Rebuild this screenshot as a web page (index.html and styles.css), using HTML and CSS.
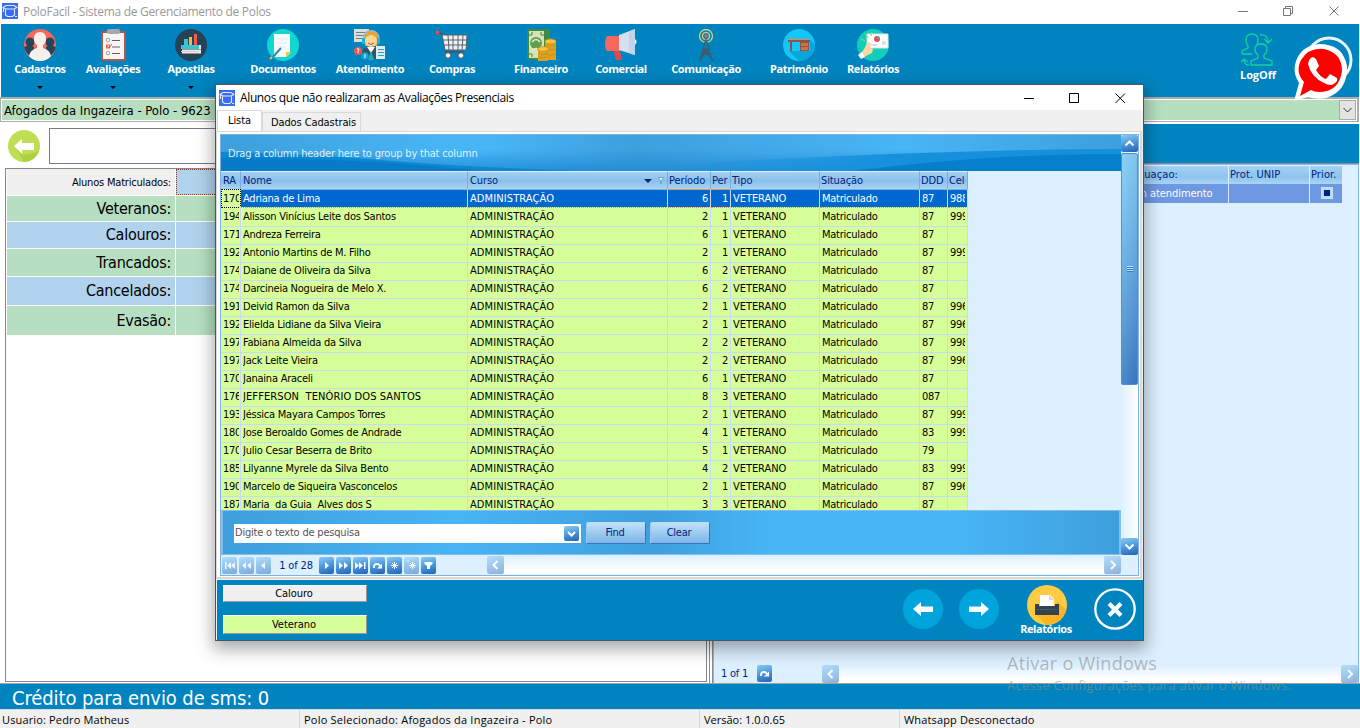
FILE: index.html
```html
<!DOCTYPE html>
<html lang="pt-BR">
<head>
<meta charset="utf-8">
<title>PoloFacil - Sistema de Gerenciamento de Polos</title>
<link rel="stylesheet" href="styles.css">
</head>
<body>
<svg width="0" height="0" class="defs">
  <defs>
    <symbol id="app" viewBox="0 0 16 16"><rect width="16" height="16" fill="#3a6cf0"/><path d="M1 4.500l3-2h8l3 2-3 1.500H4zM3.500 6.500V12l2 1.500h5l2-1.500V6.500M1.500 5v4" fill="none" stroke="#dfe9ff" stroke-width="1.100"/><path d="M13 13.500h2" stroke="#dfe9ff"/></symbol>
    <symbol id="chev-l" viewBox="0 0 17 18"><path d="M10.500 5L6.500 9l4 4" fill="none" stroke="#fff" stroke-width="2"/></symbol>
    <symbol id="chev-r" viewBox="0 0 17 18"><path d="M7 5l4 4-4 4" fill="none" stroke="#fff" stroke-width="2"/></symbol>
    <symbol id="refresh" viewBox="0 0 15 16"><path d="M4 10.500Q3.500 6.500 7 6.500q2 0 3 2" fill="none" stroke="#fff" stroke-width="1.800"/><path d="M12 6v5H7z" fill="#fff"/></symbol>
  </defs>
</svg>

<div class="window">
  <header class="titlebar">
    <svg class="app-icon" width="16" height="16"><use href="#app"/></svg>
    <span class="title">PoloFacil - Sistema de Gerenciamento de Polos</span>
    <svg class="win-controls" width="102" height="12" viewBox="0 0 102 12" fill="none" stroke="#777"><path d="M0 6.500h10M45.500 3.500h7v7h-7zM47.500 3.500v-2h7v7h-2M91.500 1.500l9 9M100.500 1.500l-9 9"/></svg>
  </header>

  <nav class="toolbar">
    <div class="tool w78"><svg width="32" height="32" viewBox="0 0 32 32"><circle cx="16" cy="16" r="16" fill="#f9695b"/><g fill="#25455a"><circle cx="6" cy="13" r="4.500"/><path d="M0 18q6-3 10 0v11Q2 26 0 18z"/><circle cx="26" cy="13" r="4.500"/><path d="M32 18q-6-3-10 0v11q8-3 10-11z"/></g><path d="M16 3q6 0 6 7 0 4-3 6v3q7 2 8 8-4 5-11 5T5 27q1-6 8-8v-3q-3-2-3-6 0-7 6-7z" fill="#f4f1ec"/></svg><span>Cadastros</span><i class="caret"></i></div>
    <div class="tool w68"><svg width="32" height="32" viewBox="0 0 32 32"><rect x="4" y="2" width="25" height="30" rx="2" fill="#b0574e"/><rect x="6" y="4" width="21" height="26" fill="#f7f6f2"/><rect x="10" y="0" width="13" height="5" rx="2" fill="#a4a9b0"/><g fill="none" stroke="#a0a0a0"><circle cx="11" cy="11" r="1.800"/><circle cx="11" cy="24" r="1.800"/><rect x="9.500" y="16" width="3" height="3" stroke="#e8604f"/></g><path d="M15 11.500h8M15 18h8M15 24.500h8" stroke="#6d5d61"/><path d="M10 17l2 2 3-4" fill="none" stroke="#ef4b3c"/></svg><span>Avaliações</span><i class="caret"></i></div>
    <div class="tool w88"><svg width="32" height="32" viewBox="0 0 32 32"><circle cx="16" cy="16" r="16" fill="#264254"/><path fill="#3fc2d2" d="M9 10h4v6H9zM6 16h19v4H6z"/><path fill="#f5b83d" d="M14 8h3v8h-3z"/><path fill="#ee5a4b" d="M19 5h3v11h-3z"/><path d="M24 16h2v4h-2zM7 20.500h19v4H7z" fill="#f1efe9"/><path d="M6 22.500h18" stroke="#d0ccc7"/></svg><span>Apostilas</span><i class="caret"></i></div>
    <div class="tool w96"><svg width="32" height="32" viewBox="0 0 32 32"><circle cx="16" cy="16" r="16" fill="#12d6d0"/><path d="M7 5h16v19l-4 4H7z" fill="#f7fafb"/><path d="M24 23l-5 5v-5z" fill="#f2c84a"/><path d="M10 10h10M10 14h10M10 18h8" stroke="#e0eaee"/><path d="M14 19l-9 10" stroke="#3187b6" stroke-width="2"/><path d="M5 28l-2 2" stroke="#f0c040" stroke-width="2"/></svg><span>Documentos</span></div>
    <div class="tool w78"><svg width="32" height="32" viewBox="0 0 32 32"><path fill="#d9e0dc" d="M0 0h15v13H0z"/><path d="M2 3.500h9M2 6.500h9M2 9.500h8" stroke="#6e8186"/><path fill="#e9a52d" d="M10 10Q10 1 17 1t7 9l-1 7H11z"/><circle cx="17" cy="12" r="6" fill="#ffd595"/><path d="M10 11Q9 2 17 2t8 9" fill="none" stroke="#98b8c8" stroke-width="1.500"/><path d="M8 9h3v6H8zM23 9h3v6h-3z" fill="#15b9d8"/><path d="M14 14q3 3 6 0" fill="none" stroke="#b0503e"/><path d="M8 23q1-4 6-5h6q6 1 6 6v6H9z" fill="#3a5068"/><path d="M13 18h8l-4 6z" fill="#fff"/><path d="M17 22l3 8-3 2-3-2z" fill="#18b3ae"/><circle cx="4" cy="22" r="4" fill="#ee5a4b"/><circle cx="11" cy="27" r="3.700" fill="#14a1d9"/><path fill="#dceef0" d="M22 17h9v13h-9z"/><path d="M24 20.500h6M24 23.500h6M24 26.500h6" stroke="#3a9cb8"/><path d="M3 20q2-1 2 1l-1 1v2M11 25v4" stroke="#fff" fill="none"/></svg><span>Atendimento</span></div>
    <div class="tool w86"><svg width="32" height="32" viewBox="0 0 32 32"><path d="M2 3l4 2 4 18h18" fill="none" stroke="#4a5260" stroke-width="1.500"/><path d="M6 6h25l-1 15H9z" fill="#eef0f4" stroke="#59606e"/><path d="M12 6l1 15M17 6v15M22 6v15M27 6l-1 15M7 11h23M8 16h22" stroke="#59606e" fill="none"/><circle cx="1.500" cy="3.500" r="2" fill="#e94b4b"/><g fill="#fff" stroke="#59606e"><circle cx="12" cy="26.500" r="2.700"/><circle cx="25" cy="26.500" r="2.700"/></g></svg><span>Compras</span></div>
    <div class="tool w92"><svg width="32" height="32" viewBox="0 0 32 32"><path fill="#3f8a45" d="M2 0h23v31H2z"/><path fill="#d7e2b5" d="M4 2h15v27H4z"/><path d="M7 3v3H4M16 3v3h3M7 28v-3H4" stroke="#3f8a45" fill="none"/><circle cx="11" cy="14" r="6" fill="#5da052"/><path d="M7 13q4-5 8 0M7 22q4-5 8 0" fill="none" stroke="#e8edcb" stroke-width="1.500"/><path fill="#dba21e" d="M20 12h11v19H20zM13 20h10v12H13z"/><g fill="#f7c53b" stroke="#c98d19" stroke-width=".8"><ellipse cx="25.500" cy="12.500" rx="5.500" ry="2.500"/><path d="M20 16q5 3 11 0M20 20q5 3 11 0M20 25q5 3 11 0M13 28q5 2 10 0" fill="none"/><ellipse cx="18" cy="20" rx="5.500" ry="2.300"/><path d="M13 24q5 3 10 0" fill="none"/></g></svg><span>Financeiro</span></div>
    <div class="tool w68"><svg width="32" height="32" viewBox="0 0 32 32"><path d="M7 18h7l3 13h-6z" fill="#d94c50"/><path d="M2 7h13v15H2q-2-2-2-7t2-8z" fill="#f8675e"/><path d="M14 6L30 0v26L14 21z" fill="#d3e0ef"/><path d="M24 3l6-3v26l-6-2z" fill="#c3d4e8"/><path d="M30 10q3 2 0 6z" fill="#fff"/></svg><span>Comercial</span></div>
    <div class="tool w102"><svg width="32" height="32" viewBox="0 0 32 32" fill="none"><circle cx="16" cy="7" r="6.500" stroke="#d6d27b" stroke-width="1.300"/><circle cx="16" cy="7" r="3.500" stroke="#f0cc60" stroke-width="1.200"/><path d="M16 7v7M15 13l-5 19M17 13l5 19M13 20h6M12 25h8M9 31l10-11M23 31L13 20M13 20l7 5M19 20l-7 5" stroke="#46566a" stroke-width="1.200"/><circle cx="16" cy="7" r="1.500" fill="#e2694f"/></svg><span>Comunicação</span></div>
    <div class="tool w84"><svg width="32" height="32" viewBox="0 0 32 32"><circle cx="16" cy="16" r="16" fill="#12c7fb"/><path d="M6 22l10 10q14-1 16-16l-5-5v11z" fill="#08a6dc"/><path fill="#8f5442" d="M5 10h22v3H5zM7 13h2v9H7zM17 13h9v9h-9z"/><path fill="#c77451" d="M18 14h7v3h-7zM18 18h7v3h-7z"/><path d="M5 10.500h22" stroke="#d48a62"/></svg><span>Patrimônio</span></div>
    <div class="tool w64"><svg width="32" height="32" viewBox="0 0 32 32"><circle cx="16" cy="16" r="16" fill="#12cdb8"/><path fill="#fff" stroke="#dce1e8" d="M10 5h21v14H10z"/><circle cx="20" cy="10" r="3" fill="#ed4b58"/><path d="M20 10V7a3 3 0 0 1 3 3z" fill="#31b6cf"/><path d="M25 13h4M25 15h4M14 16h6" stroke="#bac3cc"/><path fill="#ffd5a1" d="M11 13l3 1-1 5 3 1-1 4-8 4-4-2 4-6z"/><path d="M1 26l4-3 3 5-4 2z" fill="#fff"/><path d="M11 9l-2-4M14 7l1-4M8 12l-4-2" stroke="#9ae34e"/></svg><span>Relatórios</span></div>
    <div class="tool logoff"><svg width="36" height="34" viewBox="0 0 36 34" fill="none" stroke="#12d29b" stroke-width="1.300"><path d="M2 21v-3l6-3v-2q-2-2-2-6 0-6 6-6t6 6q0 3-1 4M2 21h10"/><path d="M18 25v-3q-3-2-3-6 0-5 6-5t6 5q0 4-3 6v3l8 3v4H11v-4z"/><path d="M20 2q8-1 8 7M24.500 6l3.500 4 4-4M4 26q0 6 5 6M1 29l3-3 4 3"/></svg><span>LogOff</span></div>
    <svg class="whatsapp" width="62" height="66" viewBox="0 0 62 66"><circle cx="36" cy="24" r="22" fill="none" stroke="#e8f5ff" stroke-width="3"/><path d="M1 65l5-18Q0 37 2 29q4-19 24-21 24 0 28 22 1 25-21 32-8 2-18-1z" fill="#fff"/><path d="M7 60l4-14Q2 36 8 24q8-13 23-11 18 4 18 22-3 21-23 21-5 0-8-2z" fill="#fe0000"/><path d="M15 28q1-6 5-7l3 2 3 7-3 4q4 7 10 9l4-5 7 4q1 3-2 5-4 4-11 0-13-6-16-19z" fill="#fff"/></svg>
  </nav>

  <div class="combo"><div class="combo-text">Afogados da Ingazeira - Polo - 9623</div><div class="combo-btn"><svg width="9" height="6" viewBox="0 0 9 6"><path d="M.5 1l4 4 4-4" fill="none" stroke="#333"/></svg></div></div>

  <main class="main">
    <section class="left">
      <div class="search-row">
        <svg width="32" height="32" viewBox="0 0 32 32"><circle cx="16" cy="16" r="16" fill="#bedf53"/><path d="M8 18l7 7 12-2 4-3q-3 11-15 12z" fill="#acd03f"/><path d="M6 16l8-7v4h12v7H14v4z" fill="#fff"/></svg>
        <div class="search-input"></div>
      </div>
      <div class="stats">
        <div class="stat first"><b>Alunos Matriculados:</b><i></i></div>
        <div class="stat green h25"><b>Veteranos:</b><i></i></div>
        <div class="stat blue h26"><b>Calouros:</b><i></i></div>
        <div class="stat green h27"><b>Trancados:</b><i></i></div>
        <div class="stat blue h28"><b>Cancelados:</b><i></i></div>
        <div class="stat green h29"><b>Evasão:</b><i></i></div>
      </div>
    </section>
    <section class="right">
      <div class="right-top"></div>
      <div class="tickets">
        <div class="t-head"><span></span><span>Situaçao:</span><span>Prot. UNIP</span><span>Prior.</span></div>
        <div class="t-row"><span></span><span>Em atendimento</span><span></span><span><em class="check"></em></span></div>
        <div class="t-foot"><span>1 of 1</span><svg class="nbtn" width="15" height="17"><use href="#refresh"/></svg><div class="hscroll"><svg class="sbtn off" width="17" height="18"><use href="#chev-l"/></svg><svg class="sbtn off" width="17" height="18"><use href="#chev-r"/></svg></div></div>
      </div>
    </section>
  </main>

  <div class="credit">Crédito para envio de sms: 0</div>
  <footer class="status"><span class="s1">Usuario: Pedro Matheus</span><span class="s2">Polo Selecionado: Afogados da Ingazeira - Polo</span><span class="s3">Versão: 1.0.0.65</span><span class="s4">Whatsapp Desconectado</span></footer>
</div>

<div class="watermark"><p>Ativar o Windows</p><small>Acesse Configurações para ativar o Windows.</small></div>

<div class="dialog">
  <header class="d-title">
    <svg class="app-icon" width="16" height="16"><use href="#app"/></svg>
    <span>Alunos que não realizaram as Avaliações Presenciais</span>
    <svg class="d-controls" width="102" height="12" viewBox="0 0 102 12" fill="none" stroke="#000"><path d="M0 6.500h10M45.500 1.500h9v9h-9zM91.500 1.500l9.500 9.500M101 1.500l-9.500 9.500"/></svg>
  </header>
  <div class="tabs"><div class="tab on">Lista</div><div class="tab">Dados Cadastrais</div></div>
  <div class="page">
    <div class="grid">
      <div class="grid-top">
        <div class="grid-main">
          <div class="groupbar"><svg class="wave" width="900" height="36" viewBox="0 0 900 36"><defs><linearGradient id="fade" x1="0" x2="1" y1="0" y2="0"><stop offset="0" stop-color="#1591dc" stop-opacity="0"/><stop offset=".5" stop-color="#1591dc"/></linearGradient><linearGradient id="low" x1="0" x2="0" y1="0" y2="1"><stop offset=".4" stop-color="#1a86d0" stop-opacity="0"/><stop offset="1" stop-color="#1a86d0" stop-opacity=".75"/></linearGradient></defs><path d="M0 0h700v36H0z" fill="url(#low)"/><path d="M0 17Q80 18 160 25T360 36H0z" fill="#0b88d0"/><path d="M0 23Q130 22 260 36H0z" fill="#087bc8"/><path d="M440 30Q720 14 900 14v22H440z" fill="url(#fade)"/><path d="M630 36Q780 18 900 19v17z" fill="#0580cc"/></svg><span>Drag a column header here to group by that column</span></div>
          <div class="rows">
            <div class="row head"><span>RA</span><span>Nome</span><span class="sorted">Curso<svg width="20" height="8" viewBox="0 0 20 8"><path d="M0 2h8l-4 4z" fill="#00237d"/><path d="M14.500.5h5l-2 3v3h-1v-3z" fill="#fff" stroke="#4a8ad0" stroke-width=".7"/></svg></span><span>Período</span><span>Per</span><span>Tipo</span><span>Situação</span><span>DDD</span><span>Cel</span></div>
            <div class="row sel"><span>170</span><span>Adriana de Lima</span><span>ADMINISTRAÇÃO</span><span>6</span><span>1</span><span>VETERANO</span><span>Matriculado</span><span>87</span><span>988</span></div>
            <div class="row"><span>194</span><span>Alisson Vinícius Leite dos Santos</span><span>ADMINISTRAÇÃO</span><span>2</span><span>1</span><span>VETERANO</span><span>Matriculado</span><span>87</span><span>999</span></div>
            <div class="row"><span>171</span><span>Andreza Ferreira</span><span>ADMINISTRAÇÃO</span><span>6</span><span>1</span><span>VETERANO</span><span>Matriculado</span><span>87</span><span></span></div>
            <div class="row"><span>192</span><span>Antonio Martins de M. Filho</span><span>ADMINISTRAÇÃO</span><span>2</span><span>1</span><span>VETERANO</span><span>Matriculado</span><span>87</span><span>999</span></div>
            <div class="row"><span>174</span><span>Daiane de Oliveira da Silva</span><span>ADMINISTRAÇÃO</span><span>6</span><span>2</span><span>VETERANO</span><span>Matriculado</span><span>87</span><span></span></div>
            <div class="row"><span>174</span><span>Darcineia Nogueira de Melo X.</span><span>ADMINISTRAÇÃO</span><span>6</span><span>2</span><span>VETERANO</span><span>Matriculado</span><span>87</span><span></span></div>
            <div class="row"><span>191</span><span>Deivid Ramon da Silva</span><span>ADMINISTRAÇÃO</span><span>2</span><span>1</span><span>VETERANO</span><span>Matriculado</span><span>87</span><span>996</span></div>
            <div class="row"><span>192</span><span>Elielda Lidiane da Silva Vieira</span><span>ADMINISTRAÇÃO</span><span>2</span><span>1</span><span>VETERANO</span><span>Matriculado</span><span>87</span><span>996</span></div>
            <div class="row"><span>197</span><span>Fabiana Almeida da Silva</span><span>ADMINISTRAÇÃO</span><span>2</span><span>2</span><span>VETERANO</span><span>Matriculado</span><span>87</span><span>998</span></div>
            <div class="row"><span>197</span><span>Jack Leite Vieira</span><span>ADMINISTRAÇÃO</span><span>2</span><span>2</span><span>VETERANO</span><span>Matriculado</span><span>87</span><span>996</span></div>
            <div class="row"><span>170</span><span>Janaina Araceli</span><span>ADMINISTRAÇÃO</span><span>6</span><span>1</span><span>VETERANO</span><span>Matriculado</span><span>87</span><span></span></div>
            <div class="row"><span>176</span><span class="caps">JEFFERSON&nbsp; TENÓRIO DOS SANTOS</span><span>ADMINISTRAÇÃO</span><span>8</span><span>3</span><span>VETERANO</span><span>Matriculado</span><span>087</span><span></span></div>
            <div class="row"><span>193</span><span>Jéssica Mayara Campos Torres</span><span>ADMINISTRAÇÃO</span><span>2</span><span>1</span><span>VETERANO</span><span>Matriculado</span><span>87</span><span>999</span></div>
            <div class="row"><span>180</span><span>Jose Beroaldo Gomes de Andrade</span><span>ADMINISTRAÇÃO</span><span>4</span><span>1</span><span>VETERANO</span><span>Matriculado</span><span>83</span><span>999</span></div>
            <div class="row"><span>170</span><span>Julio Cesar Beserra de Brito</span><span>ADMINISTRAÇÃO</span><span>5</span><span>1</span><span>VETERANO</span><span>Matriculado</span><span>79</span><span></span></div>
            <div class="row"><span>185</span><span>Lilyanne Myrele da Silva Bento</span><span>ADMINISTRAÇÃO</span><span>4</span><span>2</span><span>VETERANO</span><span>Matriculado</span><span>83</span><span>999</span></div>
            <div class="row"><span>190</span><span>Marcelo de Siqueira Vasconcelos</span><span>ADMINISTRAÇÃO</span><span>2</span><span>1</span><span>VETERANO</span><span>Matriculado</span><span>87</span><span>996</span></div>
            <div class="row"><span>187</span><span>Maria&nbsp; da Guia&nbsp; Alves dos S</span><span>ADMINISTRAÇÃO</span><span>3</span><span>3</span><span>VETERANO</span><span>Matriculado</span><span>87</span><span></span></div>
          </div>
          <div class="findbar">
            <div class="find-input"><span>Digite o texto de pesquisa</span><svg class="nbtn" width="15" height="15" viewBox="0 0 15 15"><path d="M4 6l3.500 3.500L11 6" fill="none" stroke="#fff" stroke-width="2"/></svg></div>
            <div class="btn">Find</div><div class="btn">Clear</div>
          </div>
        </div>
        <div class="vscroll">
          <svg class="sbtn" width="17" height="17" viewBox="0 0 17 17"><path d="M4.500 10.500l4-4 4 4" fill="none" stroke="#fff" stroke-width="2"/></svg>
          <div class="thumb"><i></i></div>
          <svg class="sbtn" width="17" height="17" viewBox="0 0 17 17"><path d="M4.500 6.500l4 4 4-4" fill="none" stroke="#fff" stroke-width="2"/></svg>
        </div>
      </div>
      <div class="navbar">
        <div class="nav-btns">
          <svg class="nbtn off" width="15" height="17" viewBox="0 0 15 17"><path d="M3 5v7h1.500V5zM9 5v7L5 8.500zM13 5v7L9 8.500z" fill="#fff"/></svg>
          <svg class="nbtn off" width="15" height="17" viewBox="0 0 15 17"><path d="M7 5v7L3 8.500zM12 5v7L8 8.500z" fill="#fff"/></svg>
          <svg class="nbtn off" width="15" height="17" viewBox="0 0 15 17"><path d="M9 5v7L5 8.500z" fill="#fff"/></svg>
          <span>1 of 28</span>
          <svg class="nbtn" width="15" height="17" viewBox="0 0 15 17"><path d="M6 5v7l4-3.500z" fill="#fff"/></svg>
          <svg class="nbtn" width="15" height="17" viewBox="0 0 15 17"><path d="M3 5v7l4-3.500zM8 5v7l4-3.500z" fill="#fff"/></svg>
          <svg class="nbtn" width="15" height="17" viewBox="0 0 15 17"><path d="M2 5v7l4-3.500zM6 5v7l4-3.500zM11 5v7h1.500V5z" fill="#fff"/></svg>
          <svg class="nbtn" width="15" height="17"><use href="#refresh"/></svg>
          <svg class="nbtn" width="15" height="17" viewBox="0 0 15 17"><path d="M7.500 5v7M4 8.500h7M5 6l5 5M10 6l-5 5" stroke="#fff"/></svg>
          <svg class="nbtn off" width="15" height="17" viewBox="0 0 15 17"><path d="M8.500 5v7M5 8.500h7M6 6l5 5M11 6l-5 5M3 4h2" stroke="#fff"/></svg>
          <svg class="nbtn" width="15" height="17" viewBox="0 0 15 17"><path d="M3.500 5h8v2L9 9v3H6V9L3.500 7z" fill="#fff"/></svg>
        </div>
        <div class="hscroll"><svg class="sbtn off" width="17" height="18"><use href="#chev-l"/></svg><svg class="sbtn off" width="17" height="18"><use href="#chev-r"/></svg></div>
      </div>
    </div>
  </div>
  <div class="d-foot">
    <div class="legend"><div class="lg gray">Calouro</div><div class="lg lime">Veterano</div></div>
    <div class="actions">
      <svg width="40" height="40" viewBox="0 0 40 40"><circle cx="20" cy="20" r="20" fill="#00a4dc"/><path d="M10 20l8-7v4.500h12v5.500H18v4z" fill="#fff"/></svg>
      <svg width="40" height="40" viewBox="0 0 40 40"><circle cx="20" cy="20" r="20" fill="#00a4dc"/><path d="M30 20l-8-7v4.500H10v5.500h12v4z" fill="#fff"/></svg>
      <div class="report"><svg width="40" height="40" viewBox="0 0 40 40"><circle cx="20" cy="20" r="20" fill="#ffcb43"/><path d="M9 29l10 11q16-1 20-15l-8-8z" fill="#fbb324"/><path d="M13 10h10l4 4v8H13z" fill="#fff"/><path d="M22 10v5h5z" fill="#d4d8dd"/><path d="M8 19h4v2h16v-2h4v11H8z" fill="#34444e"/><path d="M10 24.500h20" stroke="#4d606b" stroke-dasharray="2 1"/></svg><span>Relatórios</span></div>
      <svg class="close" width="42" height="42" viewBox="0 0 42 42"><circle cx="21" cy="21" r="19.700" fill="none" stroke="#fff" stroke-width="2.300"/><path d="M16.500 17l9 9M25.500 17l-9 9" stroke="#fff" stroke-width="4.200" stroke-linecap="square"/></svg>
    </div>
  </div>
</div>
</body>
</html>
```
FILE: styles.css
```css
* { box-sizing: border-box; }
body { margin: 0; width: 1360px; height: 728px; overflow: hidden; position: relative; background: #fff; color: #000; font: 11px/18px "DejaVu Sans Condensed", "DejaVu Sans", sans-serif; font-stretch: condensed; letter-spacing: -0.24px; white-space: nowrap; }
svg { display: block; flex: none; }
.defs { position: absolute; }
.window { display: flex; flex-direction: column; height: 728px; }

.titlebar { height: 24px; display: flex; align-items: center; padding: 0 20px 2px 2px; gap: 5px; font: 12px/20px "Open Sans", sans-serif; letter-spacing: -0.3px; color: #999; }
.titlebar span { padding-top: 2px; }
.win-controls { margin-left: auto; }

.toolbar { position: relative; height: 73px; margin: 0 1px; display: flex; background: #0084bf; color: #fff; font: bold 11px/16px "Open Sans", sans-serif; letter-spacing: -0.38px; }
.tool { display: flex; flex-direction: column; align-items: center; padding-top: 5px; }
.tool span { height: 16px; }
.w64 { width: 64px; } .w68 { width: 68px; } .w78 { width: 78px; } .w84 { width: 84px; } .w86 { width: 86px; }
.w88 { width: 88px; } .w92 { width: 92px; } .w96 { width: 96px; } .w102 { width: 102px; }
.caret { margin-top: 9px; border: 3px solid transparent; border-top-color: #000; border-bottom: 0; }
.logoff { width: 70px; margin-left: auto; margin-right: 66px; padding-top: 9px; letter-spacing: -0.1px; }
.whatsapp { position: absolute; left: 1292px; top: 12px; z-index: 2; }

.combo { height: 25px; margin: 0 1px 0 0; border: 1px solid #a9acb3; border-width: 2px 2px 1px 1px; display: flex; background: #fff; padding: 1px; }
.combo-text { flex: 1; background: #b6dfc0; padding-left: 2px; font-size: 13px; line-height: 21px; letter-spacing: -0.02px; }
.combo-btn { width: 17px; border: 1px solid #aaa; background: #e3e3e3; display: flex; align-items: center; justify-content: center; }

.main { flex: 1; display: flex; padding-right: 1px; min-height: 0; border-bottom: 1px solid #a0a0a0; }
.left { width: 713px; border-right: 4px double #8d8d8d; padding: 0 2px 1px 5px; display: flex; flex-direction: column; }
.search-row { display: flex; height: 46px; align-items: center; gap: 9px; padding: 2px 0 0 3px; }
.search-input { flex: 1; height: 36px; border: 1px solid #777a85; }
.stats { flex: 1; border: 1px solid #828790; padding: 0 1px; }
.stat { display: flex; margin-bottom: 1px; font-size: 16px; letter-spacing: -0.26px; }
.stat b { width: 168px; font-weight: normal; text-align: right; padding-right: 4px; margin-right: 1px; display: flex; align-items: center; justify-content: flex-end; }
.stat i { flex: 1; }
.stat.first { height: 26px; font-size: 11px; letter-spacing: -0.2px; }
.stat.first b { background: #f0f0f0; padding-top: 2px; }
.stat.first i { background: #b0d2ec; border: 1px dotted #8a3a1a; }
.green b, .green i { background: #b5dfc0; }
.blue b, .blue i { background: #b0d2ec; }
.h25 { height: 25px; } .h26 { height: 26px; } .h27 { height: 27px; } .h28 { height: 28px; } .h29 { height: 29px; }

.right { flex: 1; display: flex; flex-direction: column; }
.right-top { height: 42px; border-top: 2px solid #fff; background: #0084bf; border-bottom: 1px solid #8d8d8d; }
.tickets { flex: 1; display: flex; flex-direction: column; background: #ddf0ff; border: 1px solid #8ab8e6; border-bottom: 0; padding-right: 15px; }
.t-head, .t-row { display: grid; grid-template-columns: 416px 99px 81px 33px; width: 629px; height: 18px; margin-top: 1px; color: #00237d; }
.t-head { background: linear-gradient(#a7d0f2, #8ec3ee 60%, #a9d4f5); letter-spacing: .1px; }
.t-head span, .t-row span { border-right: 1px solid #dcefff; padding-left: 1px; }
.t-row { background: #6e98e2; color: #fff; height: 19px; margin-top: 0; letter-spacing: -0.05px; }
.t-row span { line-height: 20px; }
.check { display: block; width: 12px; height: 12px; margin: 3px 0 0 10px; border: 1px solid #c6e2f8; background: #00237d; box-shadow: inset 0 0 0 2px #b5dbf6; }
.t-foot { margin: auto -15px 0 0; height: 19px; display: flex; align-items: center; padding-left: 7px; color: #00237d; }
.t-foot .nbtn { margin: 0 50px 0 9px; }

.credit { height: 25px; background: #0084bf; color: #fff; font-size: 20px; line-height: 28px; padding-left: 12px; letter-spacing: -0.1px; }
.status { height: 19px; display: flex; background: #f0f0f0; border-top: 1px solid #d8d8d8; font: 11px/20px "Open Sans", sans-serif; letter-spacing: .15px; }
.status span { border-left: 1px solid #d4d4d4; padding-left: 4px; }
.status .s1 { width: 299px; border: 0; padding-left: 2px; } .s2 { width: 400px; letter-spacing: .22px; } .s3 { width: 200px; letter-spacing: 0; } .s4 { flex: 1; }
.watermark { position: absolute; left: 1007px; top: 652px; color: rgba(140,145,150,.6); font-family: "Open Sans", sans-serif; font-stretch: normal; letter-spacing: .3px; }
.watermark p { margin: 0; font-size: 18px; line-height: 22px; }
.watermark small { display: block; font-size: 13px; line-height: 22px; letter-spacing: .25px; }

.dialog { position: absolute; left: 215px; top: 84px; width: 929px; height: 557px; border: 1px solid #4a5560; background: #f0f0f0; box-shadow: 0 6px 16px 2px rgba(0,0,0,.34); display: flex; flex-direction: column; }
.d-title { height: 25px; background: #fff; display: flex; align-items: center; gap: 5px; padding: 0 17px 0 3px; font: 12px/24px "Open Sans", sans-serif; letter-spacing: -0.37px; }
.d-controls { margin-left: auto; }
.tabs { height: 21px; display: flex; align-items: flex-end; padding-left: 1px; letter-spacing: -0.1px; }
.tab { height: 19px; width: 99px; border: 1px solid #d9d9d9; border-bottom: 0; text-align: center; line-height: 19px; padding-left: 4px; }
.tab.on { width: 45px; height: 21px; background: #fff; padding: 0; }
.page { height: 448px; background: #fff; border: 1px solid #d9d9d9; border-width: 1px 2px 2px 1px; padding: 2px 1px 1px 3px; margin-right: 1px; }
.grid { height: 442px; border: 1px solid #7eb2e6; background: #ddf0ff; }
.grid-top { display: flex; height: 420px; }
.grid-main { flex: 1; display: flex; flex-direction: column; min-width: 0; }
.groupbar { position: relative; height: 36px; flex: none; background: linear-gradient(90deg, #3e9fdc, #47b5f6 25%, #47b5f6 30%, #3e9fdc 46%, #47b5f6 76%, #3e9fdc); color: #dff2ff; font-size: 11px; line-height: 37px; letter-spacing: -0.2px; }
.groupbar span { position: relative; padding-left: 7px; }
.wave { position: absolute; left: 0; top: 0; }
.rows { flex: 1; overflow: hidden; min-height: 0; }
.row { display: grid; grid-template-columns: 20px 227px 200px 43px 20px 89px 100px 28px 20px; width: 747px; height: 18px; background: #d6ff99; }
.row span { border-right: 1px solid #c8dafa; border-bottom: 1px solid #c8dafa; padding: 0 2px 0 2px; overflow: clip; overflow-clip-margin: content-box; line-height: 19px; }
.row span:nth-child(1) { padding-right: 1px; }
.row:not(.head) span:nth-child(3), .row .caps { letter-spacing: .1px; }
.row:not(.head) span:nth-child(6) { letter-spacing: -0.05px; }
.row:not(.head) span:nth-child(4), .row:not(.head) span:nth-child(5) { text-align: right; }
.row.head { background: linear-gradient(#a8d2f3, #8bc0ec 55%, #a8d3f5); color: #00237d; }
.row.head span { border-right-color: #70aee4; border-bottom-color: #82b6e6; border-top: 1px solid #dceeff; line-height: 17px; letter-spacing: -0.1px; }
.row.head span:nth-child(n+4) { padding-left: 1px; padding-right: 0; }
.row.head .sorted { display: flex; justify-content: space-between; align-items: center; }
.sorted svg { margin-right: 1px; }
.row.sel { background: #0067d1; color: #fff; }
.row.sel span { border-top: 1px dotted #d99a3c; border-bottom: 1px dotted #d99a3c; line-height: 17px; }
.row.sel span:first-child { background: #d6ff99; color: #000; border: 1px dotted #000; padding-left: 1px; }
.findbar { height: 45px; border: 1px solid #86bceb; border-width: 1px 2px 1px 2px; background: linear-gradient(90deg, #3e9fdc, #47b5f6 26%, #3e9fdc 48%, #47b5f6 61%, #47b5f6 82%, #3e9fdc); display: flex; align-items: center; gap: 5px; padding-left: 11px; color: #00237d; }
.find-input { width: 347px; height: 19px; background: #fff; color: #555; display: flex; justify-content: space-between; align-items: center; padding: 0 2px 0 1px; margin-top: 1px; letter-spacing: -0.2px; }
.btn { width: 60px; height: 22px; border: 1px solid #3b72c0; border-top-color: #b9dcf7; border-left-color: #9ccbf1; border-radius: 2px; background: linear-gradient(#c0e0f8, #7bb5e8); text-align: center; line-height: 20px; padding-right: 2px; }
.btn + .btn { margin-left: -1px; }
.vscroll { width: 17px; display: flex; flex-direction: column; background: linear-gradient(90deg, #ddf0ff, #fff); }
.thumb { height: 232px; margin: 1px 0 auto; width: 17px; border: 1px solid #4b92d4; border-radius: 2px; background: linear-gradient(100deg, rgba(160,220,250,.7), rgba(30,100,190,.25)), linear-gradient(#62b5eb, #4179bd); display: flex; align-items: center; justify-content: center; }
.thumb i { width: 6px; height: 6px; background: repeating-linear-gradient(#c5e3fa 0 1px, #3975bd 1px 2px); }
.sbtn, .nbtn { background: linear-gradient(165deg, #8ccbf2, #4a98dc 50%, #2360b4); border-radius: 2px; }
.off { opacity: .5; }
.navbar { display: flex; height: 20px; align-items: center; }
.nav-btns { width: 266px; display: flex; gap: 2px; padding-left: 1px; align-items: center; color: #00237d; }
.nav-btns span { width: 42px; text-align: center; letter-spacing: -0.15px; margin: 1px 0 0 2px; }
.hscroll { flex: 1; display: flex; justify-content: space-between; background: linear-gradient(#ddf0ff, #fff 80%); }
.navbar .hscroll { margin-right: 17px; }

.d-foot { flex: 1; margin: 1px 0 0 1px; background: #0084bf; display: flex; justify-content: space-between; padding: 5px 7px 0 6px; }
.legend { display: flex; flex-direction: column; gap: 13px; }
.lg { width: 144px; height: 17px; border: 1px solid #fff; border-color: #fff #999 #999 #fff; text-align: center; line-height: 16px; letter-spacing: -0.05px; padding-right: 2px; }
.gray { background: #f0f0f0; } .lime { background: #d6ff99; height: 19px; line-height: 18px; }
.actions { display: flex; align-items: flex-start; padding-top: 4px; }
.actions > svg + svg { margin-left: 16px; }
.report { width: 60px; margin: -4px 17px 0 18px; display: flex; flex-direction: column; align-items: center; color: #fff; font: bold 11px/12px "Open Sans", sans-serif; letter-spacing: -0.45px; }
.report span { margin: -2px 2px 0 0; }
.actions .close { margin: -1px 0 0 0; }
```
